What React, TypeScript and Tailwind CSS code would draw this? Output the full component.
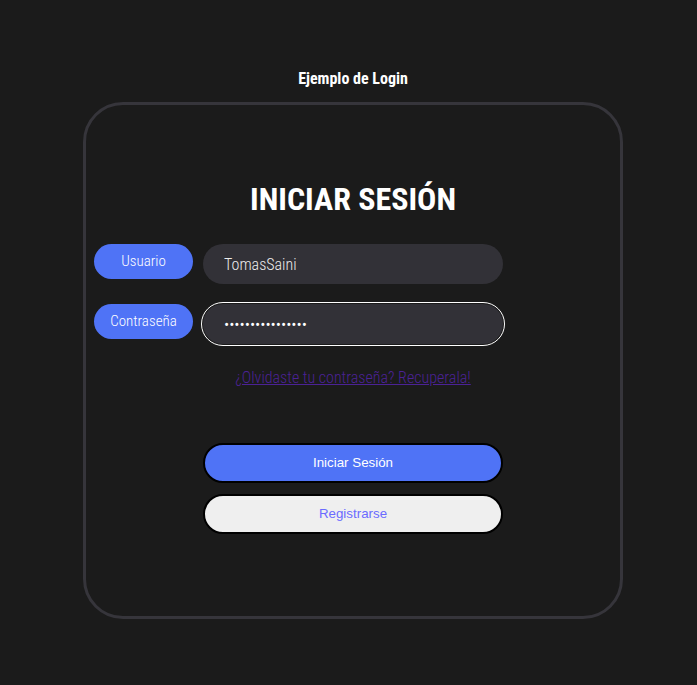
import React from "react";

const cond = { fontFamily: "Roboto, 'Liberation Sans', sans-serif", fontStretch: "75%" } as React.CSSProperties;

export default function App() {
  return (
    <div className="min-h-[685px] w-full bg-[#1b1b1b] flex flex-col items-center pl-[9px] pt-[71px]" style={cond}>
      <h1 className="text-[16px] leading-none font-bold text-white">Ejemplo de Login</h1>
      <div className="mt-[15px] w-[540px] h-[517px] rounded-[40px] border-[3px] border-[#36353b] flex flex-col items-center">
        <h2 className="mt-[78px] text-[32px] leading-none font-bold text-white">INICIAR SESIÓN</h2>
        <div className="mt-[29px] w-full grid grid-cols-[117px_300px_117px] gap-y-[20px]">
          <div className="pl-[8px]">
            <div className="w-[99px] h-[35px] rounded-full bg-[#4f73f6] text-white text-[15px] font-light flex items-center justify-center">Usuario</div>
          </div>
          <input
            readOnly
            value="TomasSaini"
            className="h-[40px] w-[300px] rounded-full bg-[#323137] text-[#ececec] text-[16px] font-light px-[21px] outline-none"
            style={cond}
          />
          <div />
          <div className="pl-[8px]">
            <div className="w-[99px] h-[35px] rounded-full bg-[#4f73f6] text-white text-[15px] font-light flex items-center justify-center">Contraseña</div>
          </div>
          <input
            readOnly
            type="password"
            value="aaaaaaaaaaaaaaaa"
            className="h-[40px] w-[300px] rounded-full bg-[#323137] text-white text-[16px] font-light px-[21px] outline-1 outline-white outline-offset-1"
            style={cond}
          />
          <div />
        </div>
        <a href="#" className="mt-[26px] text-[16px] leading-none font-light text-[#4b2296] underline">¿Olvidaste tu contraseña? Recuperala!</a>
        <div className="mt-[57px] flex flex-col gap-[11px]" style={{ fontFamily: "'Liberation Sans', Arial, sans-serif" }}>
          <button className="w-[300px] h-[40px] rounded-full border-2 border-black bg-[#4f73f6] text-white text-[13.33px]">Iniciar Sesión</button>
          <button className="w-[300px] h-[40px] rounded-full border-2 border-black bg-[#efefef] text-[#6b6bff] text-[13.33px]">Registrarse</button>
        </div>
      </div>
    </div>
  );
}
